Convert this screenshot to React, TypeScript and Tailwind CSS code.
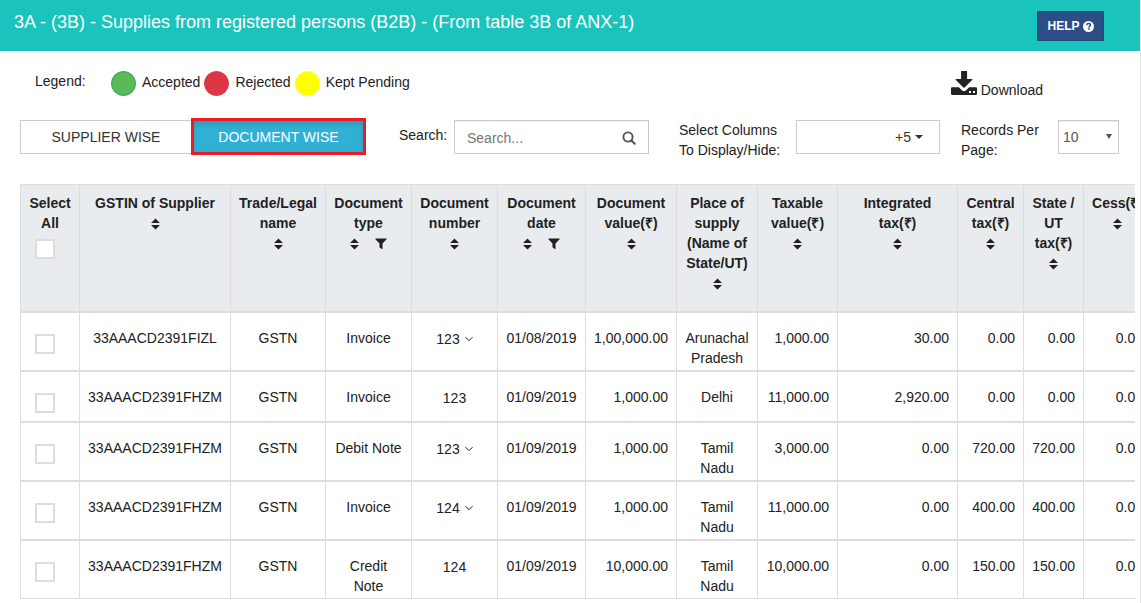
import React, { useState } from 'react';

type Column = {
  label: string;
  width: string;
  filter?: boolean;
};

type SupplyRow = {
  gstin: string;
  name: string;
  type: string;
  number: string;
  expandable?: boolean;
  date: string;
  value: string;
  place: string;
  amounts: string[];
};

const columns: Column[] = [
  { label: 'GSTIN of Supplier', width: 'w-[151px]' },
  { label: 'Trade/Legal name', width: 'w-[95px]' },
  { label: 'Document type', width: 'w-[86px]', filter: true },
  { label: 'Document number', width: 'w-[86px]' },
  { label: 'Document date', width: 'w-[88px]', filter: true },
  { label: 'Document value(₹)', width: 'w-[91px]' },
  { label: 'Place of supply (Name of State/UT)', width: 'w-[81px]' },
  { label: 'Taxable value(₹)', width: 'w-[80px]' },
  { label: 'Integrated tax(₹)', width: 'w-[120px]' },
  { label: 'Central tax(₹)', width: 'w-[66px]' },
  { label: 'State / UT tax(₹)', width: 'w-[60px]' },
  { label: 'Cess(₹)', width: 'w-[68px]' },
];

const rows: SupplyRow[] = [
  {
    gstin: '33AAACD2391FIZL',
    name: 'GSTN',
    type: 'Invoice',
    number: '123',
    expandable: true,
    date: '01/08/2019',
    value: '1,00,000.00',
    place: 'Arunachal Pradesh',
    amounts: ['1,000.00', '30.00', '0.00', '0.00', '0.00'],
  },
  {
    gstin: '33AAACD2391FHZM',
    name: 'GSTN',
    type: 'Invoice',
    number: '123',
    date: '01/09/2019',
    value: '1,000.00',
    place: 'Delhi',
    amounts: ['11,000.00', '2,920.00', '0.00', '0.00', '0.00'],
  },
  {
    gstin: '33AAACD2391FHZM',
    name: 'GSTN',
    type: 'Debit Note',
    number: '123',
    expandable: true,
    date: '01/09/2019',
    value: '1,000.00',
    place: 'Tamil Nadu',
    amounts: ['3,000.00', '0.00', '720.00', '720.00', '0.00'],
  },
  {
    gstin: '33AAACD2391FHZM',
    name: 'GSTN',
    type: 'Invoice',
    number: '124',
    expandable: true,
    date: '01/09/2019',
    value: '1,000.00',
    place: 'Tamil Nadu',
    amounts: ['11,000.00', '0.00', '400.00', '400.00', '0.00'],
  },
  {
    gstin: '33AAACD2391FHZM',
    name: 'GSTN',
    type: 'Credit Note',
    number: '124',
    date: '01/09/2019',
    value: '10,000.00',
    place: 'Tamil Nadu',
    amounts: ['10,000.00', '0.00', '150.00', '150.00', '0.00'],
  },
];

const legend = [
  { label: 'Accepted', color: 'bg-[#5cb85c] border-[#28a745]' },
  { label: 'Rejected', color: 'bg-[#dc3545] border-[#dc3545]' },
  { label: 'Kept Pending', color: 'bg-[#ffff00] border-[#ffff00]' },
];

const cell = 'border-x border-[#dddddd] px-2 pt-[15px] align-top';
const headCell = 'border border-b-2 border-[#dddddd] px-2 pt-2 align-top';

const SortIcon = () => (
  <svg className="h-3 w-[9px]" viewBox="0 0 9 12" fill="currentColor">
    <path d="M4.5 0.5L9 5H0zM4.5 11.5L0 7h9z" />
  </svg>
);

const FilterIcon = () => (
  <svg className="h-3 w-3" viewBox="0 0 12 12" fill="currentColor">
    <path d="M0.7 0.5h10.6c.4 0 .5.4.3.7L7.5 5.6v5.2c0 .4-.4.6-.7.3L4.7 9.4c-.2-.1-.2-.3-.2-.5V5.6L.4 1.2C.2.9.3.5.7.5z" />
  </svg>
);

const SearchIcon = () => (
  <svg className="h-[14px] w-[14px]" viewBox="0 0 14 14" fill="none" stroke="currentColor">
    <circle cx="6" cy="6" r="4.6" strokeWidth="1.9" />
    <path d="M9.5 9.5l3.2 3.2" strokeWidth="2.1" strokeLinecap="round" />
  </svg>
);

const ChevronIcon = () => (
  <svg className="h-2 w-2" viewBox="0 0 8 8" fill="none" stroke="currentColor">
    <path d="M0.5 2.2L4 5.7l3.5-3.5" />
  </svg>
);

const QuestionIcon = () => (
  <svg className="h-[11px] w-[11px]" viewBox="0 0 11 11">
    <circle cx="5.5" cy="5.5" r="5.5" fill="currentColor" />
    <path
      d="M3.6 4.1c.1-1.2.9-1.7 2-1.7s1.9.6 1.9 1.6c0 1.2-1.6 1.2-1.6 2.5"
      fill="none"
      stroke="#2c4e86"
      strokeWidth="1.5"
    />
    <path d="M5.1 7.3h1.6v1.5H5.1z" fill="#2c4e86" />
  </svg>
);

const DownloadIcon = () => (
  <svg className="h-6 w-[26px]" viewBox="0 0 26 24">
    <path
      d="M1.2 16.2h6.6l3.3 3.2c1.2 1.1 2.6 1.1 3.8 0l3.3-3.2h6.6c.7 0 1.2.5 1.2 1.2v5.4c0 .7-.5 1.2-1.2 1.2H1.2C.5 24 0 23.5 0 22.8v-5.4c0-.7.5-1.2 1.2-1.2z"
      fill="currentColor"
    />
    <path
      d="M10.5 0h5.2c.2 0 .4.2.4.4V8h4.6c.7 0 .9.6.4 1.1l-7.5 7.4c-.4.4-.8.4-1.2 0L4.9 9.1C4.400 8.600 4.600 8 5.300 8h4.800V.4c0-.2.2-.4.4-.4z"
      fill="currentColor"
    />
    <path d="M18 20h2v2h-2zM22 20h2v2h-2z" fill="#fff" />
  </svg>
);

const CheckBox: React.FC<{ label: string; checked: boolean; onChange: () => void }> = ({
  label,
  checked,
  onChange,
}) => (
  <input
    type="checkbox"
    aria-label={label}
    checked={checked}
    onChange={onChange}
    className="mr-[10px] h-5 w-5 appearance-none border-2 border-[#dddddd] bg-white align-top checked:bg-[#31b0d5]"
  />
);

export default function App() {
  const [view, setView] = useState('document');
  const [selected, setSelected] = useState<number[]>([]);

  const toggleRow = (index: number) => {
    setSelected((prev) =>
      prev.includes(index) ? prev.filter((i) => i !== index) : [...prev, index]
    );
  };

  const toggleAll = () => {
    setSelected(selected.length === rows.length ? [] : rows.map((_, i) => i));
  };

  const tabClass = (active: boolean) =>
    active
      ? 'h-[37px] w-[175px] border-3 border-[#ed1c24] bg-[#31b0d5] text-white shadow-[inset_0_3px_5px_rgba(0,0,0,0.125)]'
      : 'h-[34px] w-[171px] border border-r-0 border-[#cccccc] bg-white text-[#333333]';

  return (
    <div className="min-h-screen border-r border-[#e5e5e5] bg-white font-['Liberation_Sans',Arial,sans-serif] text-sm leading-5 text-[#212121]">
      {/* Title bar */}
      <header className="flex h-[51px] items-start justify-between bg-[#1ac4bd] pr-9 pl-[14px] text-white">
        <h1 className="pt-[10px] text-lg leading-6">
          3A - (3B) - Supplies from registered persons (B2B) - (From table 3B of ANX-1)
        </h1>
        <button className="mt-[11px] flex h-[30px] w-[67px] items-center justify-center gap-[3px] border border-[#204d74] bg-[#2c4e86] text-xs font-bold">
          HELP
          <QuestionIcon />
        </button>
      </header>

      {/* Legend and download */}
      <div className="flex items-start justify-between pt-5 pr-[97px] pl-[35px]">
        <div className="flex">
          <span className="w-[76px]">Legend:</span>
          <ul className="flex gap-1">
            {legend.map((item) => (
              <li key={item.label} className="flex items-start gap-[6px] leading-[22px]">
                <span className={`h-[25px] w-[25px] rounded-full border ${item.color}`} />
                {item.label}
              </li>
            ))}
          </ul>
        </div>
        <button className="flex items-end gap-1">
          <DownloadIcon />
          <span className="-mb-[5px]">Download</span>
        </button>
      </div>

      {/* Toolbar */}
      <div className="flex items-start pt-[22px] pr-[21px] pl-5">
        <div className="flex h-[37px] items-center">
          <button className={tabClass(view === 'supplier')} onClick={() => setView('supplier')}>
            SUPPLIER WISE
          </button>
          <button className={tabClass(view === 'document')} onClick={() => setView('document')}>
            DOCUMENT WISE
          </button>
        </div>

        <label htmlFor="search" className="ml-[33px] w-[55px] pt-[7px]">
          Search:
        </label>
        <div className="mt-[2px] flex h-[34px] w-[195px] items-center border border-[#cccccc] px-3 pt-[2px] shadow-[inset_0_1px_1px_rgba(0,0,0,0.075)]">
          <input
            id="search"
            type="text"
            placeholder="Search..."
            className="min-w-0 flex-1 outline-none placeholder:text-[#777777]"
          />
          <button aria-label="Search" className="text-[#555555]">
            <SearchIcon />
          </button>
        </div>

        <div className="ml-[30px] w-[117px] pt-[2px] pr-2" id="columns-label">
          Select Columns To Display/Hide:
        </div>
        <button
          aria-labelledby="columns-label"
          className="mt-[2px] flex h-[34px] w-[144px] items-center justify-end gap-1 border border-[#cccccc] pr-4 text-[#333333]"
        >
          +5
          <svg className="h-1 w-2" viewBox="0 0 8 4" fill="currentColor">
            <path d="M0 0h8L4 4z" />
          </svg>
        </button>

        <label htmlFor="records" className="ml-auto w-[97px] pt-[2px] pr-4">
          Records Per Page:
        </label>
        <div className="relative mt-[2px]">
          <select
            id="records"
            className="h-[34px] w-[61px] appearance-none border border-[#cccccc] bg-white pl-1 text-[#555555] shadow-[inset_0_1px_1px_rgba(0,0,0,0.075)]"
          >
            <option>10</option>
            <option>20</option>
            <option>50</option>
          </select>
          <svg
            className="pointer-events-none absolute top-[14px] right-[7px] h-[5px] w-[6px] text-[#555555]"
            viewBox="0 0 6 5"
            fill="currentColor"
          >
            <path d="M0 0h6L3 5z" />
          </svg>
        </div>
      </div>

      {/* Supplies table */}
      <div className="mt-6 mr-[5px] ml-5 overflow-x-auto [scrollbar-width:none]">
        <table className="w-full min-w-[1132px] table-fixed border-collapse">
          <thead>
            <tr className="h-[127px] bg-[#e9ecef]">
              <th className={`w-[59px] ${headCell}`}>
                Select All
                <div className="pt-[6px]">
                  <CheckBox
                    label="Select all"
                    checked={selected.length === rows.length}
                    onChange={toggleAll}
                  />
                </div>
              </th>
              {columns.map((column) => (
                <th key={column.label} className={`${headCell} ${column.width}`}>
                  {column.label}
                  <div className="flex h-[22px] items-center justify-center gap-4">
                    <button aria-label={`Sort by ${column.label}`}>
                      <SortIcon />
                    </button>
                    {column.filter && (
                      <button aria-label={`Filter by ${column.label}`}>
                        <FilterIcon />
                      </button>
                    )}
                  </div>
                </th>
              ))}
            </tr>
          </thead>
          <tbody className="text-center">
            {rows.map((row, index) => (
              <tr
                key={index}
                className={`border-b-2 border-[#dddddd] last:border-b ${
                  row.place === 'Delhi' ? 'h-[51px]' : 'h-[59px]'
                }`}
              >
                <td className="border-x border-[#dddddd] px-2 pt-[21px] align-top">
                  <CheckBox
                    label={`Select row ${index + 1}`}
                    checked={selected.includes(index)}
                    onChange={() => toggleRow(index)}
                  />
                </td>
                <td className={cell}>{row.gstin}</td>
                <td className={cell}>{row.name}</td>
                <td className={cell}>{row.type}</td>
                <td className="border-x border-[#dddddd] px-2 pt-4 align-top">
                  <span className="flex items-center justify-center gap-[5px]">
                    {row.number}
                    {row.expandable && <ChevronIcon />}
                  </span>
                </td>
                <td className={cell}>{row.date}</td>
                <td className={`${cell} text-right`}>{row.value}</td>
                <td className={cell}>{row.place}</td>
                {row.amounts.map((amount, i) => (
                  <td key={i} className={`${cell} text-right`}>
                    {amount}
                  </td>
                ))}
              </tr>
            ))}
          </tbody>
        </table>
      </div>
    </div>
  );
}
